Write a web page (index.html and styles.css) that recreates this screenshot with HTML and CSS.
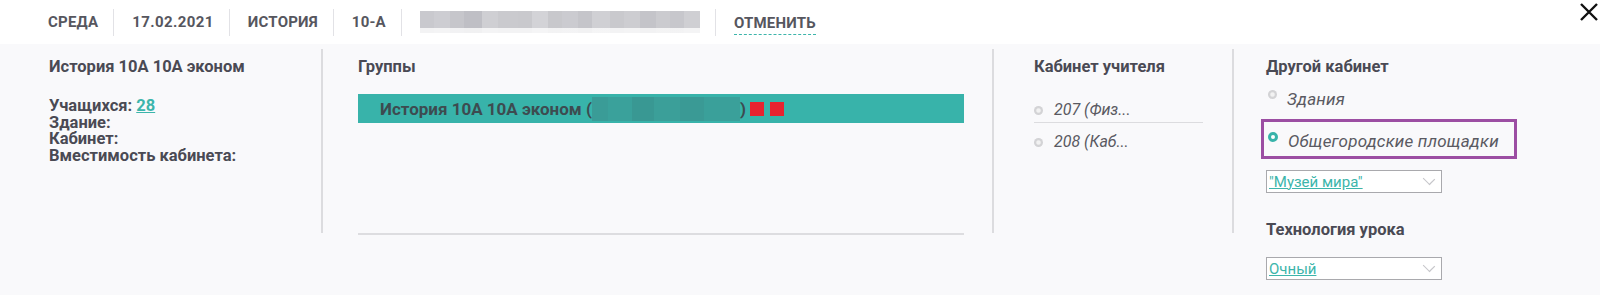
FILE: index.html
```html
<!DOCTYPE html>
<html lang="ru">
<head>
<meta charset="utf-8">
<title>Урок</title>
<link rel="stylesheet" href="styles.css">
</head>
<body>
<div class="topbar">
  <div class="crumb first">СРЕДА</div>
  <div class="crumb date">17.02.2021</div>
  <div class="crumb">ИСТОРИЯ</div>
  <div class="crumb">10-А</div>
  <div class="crumb"><div class="mosaic"></div></div>
  <div class="crumb"><span class="cancel">ОТМЕНИТЬ</span></div>
  <div class="close" aria-label="Закрыть">
    <svg width="20" height="20" viewBox="0 0 20 20"><path d="M2 2 L18 18 M18 2 L2 18" stroke="#111" stroke-width="2.4" fill="none"/></svg>
  </div>
</div>
<div class="main">
  <div class="col col-info">
    <div class="title">История 10А 10А эконом</div>
    <div class="facts">
      <div>Учащихся: <a class="link" href="#">28</a></div>
      <div>Здание:</div>
      <div>Кабинет:</div>
      <div>Вместимость кабинета:</div>
    </div>
  </div>
  <div class="sep"></div>
  <div class="col col-groups">
    <div class="title">Группы</div>
    <div class="groups">
      <div class="group-row">
        <span>История 10А 10А эконом (</span><span class="mosaic-teal"></span><span class="paren">)</span><span class="sq"></span><span class="sq sq2"></span>
      </div>
    </div>
  </div>
  <div class="sep"></div>
  <div class="col col-rooms">
    <div class="title">Кабинет учителя</div>
    <div class="rooms">
      <div class="room"><span class="radio"></span><span class="it">207 (Физ...</span></div>
      <div class="room"><span class="radio"></span><span class="it">208 (Каб...</span></div>
    </div>
  </div>
  <div class="sep"></div>
  <div class="col col-other">
    <div class="title">Другой кабинет</div>
    <div class="opt"><span class="radio"></span><span class="it">Здания</span></div>
    <div class="opt opt-selected"><span class="radio radio-on"></span><span class="it">Общегородские площадки</span></div>
    <div class="select"><span class="link">"Музей мира"</span><span class="chev"></span></div>
    <div class="title title-tech">Технология урока</div>
    <div class="select select-tech"><span class="link">Очный</span><span class="chev"></span></div>
  </div>
</div>
</body>
</html>
```
FILE: styles.css
```css
* { box-sizing: border-box; }
html, body { margin: 0; padding: 0; }
body {
  width: 1600px;
  height: 295px;
  overflow: hidden;
  background: #f9f9fb;
  font-family: Roboto, "Liberation Sans", sans-serif;
  color: #4a4a54;
}
.topbar {
  height: 44px;
  background: #fff;
  display: flex;
  align-items: center;
  padding-left: 30px;
}
.crumb {
  height: 27px;
  display: flex;
  align-items: center;
  padding: 0 15px 0 18px;
  border-left: 1px solid #e2e2e6;
  font-size: 15px;
  font-weight: 700;
  letter-spacing: 0.2px;
  color: #56565e;
}
.crumb.first { border-left: none; }
.crumb.date { letter-spacing: 0.4px; }
.mosaic {
  width: 280px;
  height: 22px;
  background:
    linear-gradient(to bottom, transparent 0 17px, rgba(255,255,255,0.78) 17px 22px),
    linear-gradient(to right,
      #c9c9ce 0 14px, #cdcdd2 14px 30px, #c6c6cb 30px 44px, #bfbfc5 44px 62px,
      #cfcfd3 62px 78px, #cacace 78px 98px, #c9c9cd 98px 112px, #d3d3d7 112px 128px,
      #c8c8cc 128px 142px, #cbcbd0 142px 158px, #c5c5ca 158px 172px, #d0d0d4 172px 190px,
      #c9c9cd 190px 204px, #cdcdd1 204px 220px, #c4c4c9 220px 236px, #cbcbcf 236px 250px,
      #c7c7cc 250px 264px, #cfcfd3 264px 280px);
}
.cancel {
  padding-bottom: 1px;
  border-bottom: 1px dashed #3cb5ab;
  line-height: 19px;
  margin-top: 4px;
}
.close {
  margin-left: auto;
  align-self: flex-start;
  margin-top: 2px;
  width: 21px;
  height: 21px;
}
.main {
  display: grid;
  grid-template-columns: 321px 2px 669px 2px 238px 2px 1fr;
  align-items: start;
  padding-top: 5px;
}
.sep {
  height: 184px;
  background: #dcdcdf;
}
.col { padding-top: 8px; }
.title {
  font-size: 16.5px;
  font-weight: 700;
  line-height: 19px;
  color: #4a4a54;
}
.col-info { padding-left: 49px; }
.facts {
  margin-top: 22px;
  font-size: 16.5px;
  font-weight: 700;
  line-height: 16.5px;
}
.link { color: #3cb5ab; text-decoration: underline; }
.col-groups { padding-left: 35px; padding-right: 28px; }
.groups {
  margin-top: 18px;
  height: 141px;
  border-bottom: 2px solid #dddde0;
}
.group-row {
  height: 29px;
  background: #38b3aa;
  display: flex;
  align-items: center;
  padding-left: 22px;
  font-size: 17px;
  font-weight: 700;
  color: #3d4b50;
}
.mosaic-teal {
  width: 148px;
  height: 24px;
  background: linear-gradient(to right,
    #3a9c97 0 16px, #3aa19b 16px 40px, #399893 40px 62px, #3b9f99 62px 88px,
    #3a9a95 88px 112px, #3aa09a 112px 148px);
}
.paren { margin-right: 4px; }
.sq {
  width: 14px;
  height: 14px;
  background: #e8222f;
}
.sq2 { margin-left: 6px; }
.col-rooms { padding-left: 40px; }
.rooms { margin-top: 24px; width: 169px; }
.room {
  display: flex;
  align-items: center;
  height: 20px;
}
.room + .room {
  border-top: 1px solid #dcdcdf;
  margin-top: 2px;
  padding-top: 9px;
  height: 30px;
}
.radio {
  width: 9px;
  height: 9px;
  border-radius: 50%;
  background: radial-gradient(circle at 50% 50%, #f2f2f2 0 25%, #d4d4d6 45%, #cfcfd2 100%);
  margin-right: 11px;
  flex: none;
}
.it {
  font-style: italic;
  font-size: 16px;
  line-height: 18px;
  color: #5a5a62;
}
.col-other { padding-left: 32px; }
.opt {
  display: flex;
  align-items: flex-start;
  margin-top: 14px;
  margin-left: 2px;
  height: 18px;
}
.opt .it { font-size: 17px; letter-spacing: 0.2px; }
.opt .radio { margin-top: 0; margin-right: 10px; }
.opt-selected {
  margin-left: -5px;
  margin-top: 11px;
  width: 256px;
  height: 40px;
  border: 3px solid #9c4ea3;
  padding: 10px 0 0 4px;
}
.radio-on {
  width: 10px;
  height: 10px;
  background: #fff;
  border: 3px solid #38b3aa;
}
.select {
  width: 176px;
  height: 23px;
  border: 1px solid #a9a9ad;
  background: #fff;
  display: flex;
  align-items: center;
  justify-content: space-between;
  padding: 0 4px 0 2px;
  margin-top: 11px;
  font-size: 15px;
}
.chev {
  width: 8px;
  height: 8px;
  border-right: 1px solid #c6c6ca;
  border-bottom: 1px solid #c6c6ca;
  transform: rotate(45deg) scaleX(1.2);
  margin-top: -5px;
  margin-right: 4px;
}
.title-tech { margin-top: 27px; }
.select-tech { margin-top: 18px; }
```
